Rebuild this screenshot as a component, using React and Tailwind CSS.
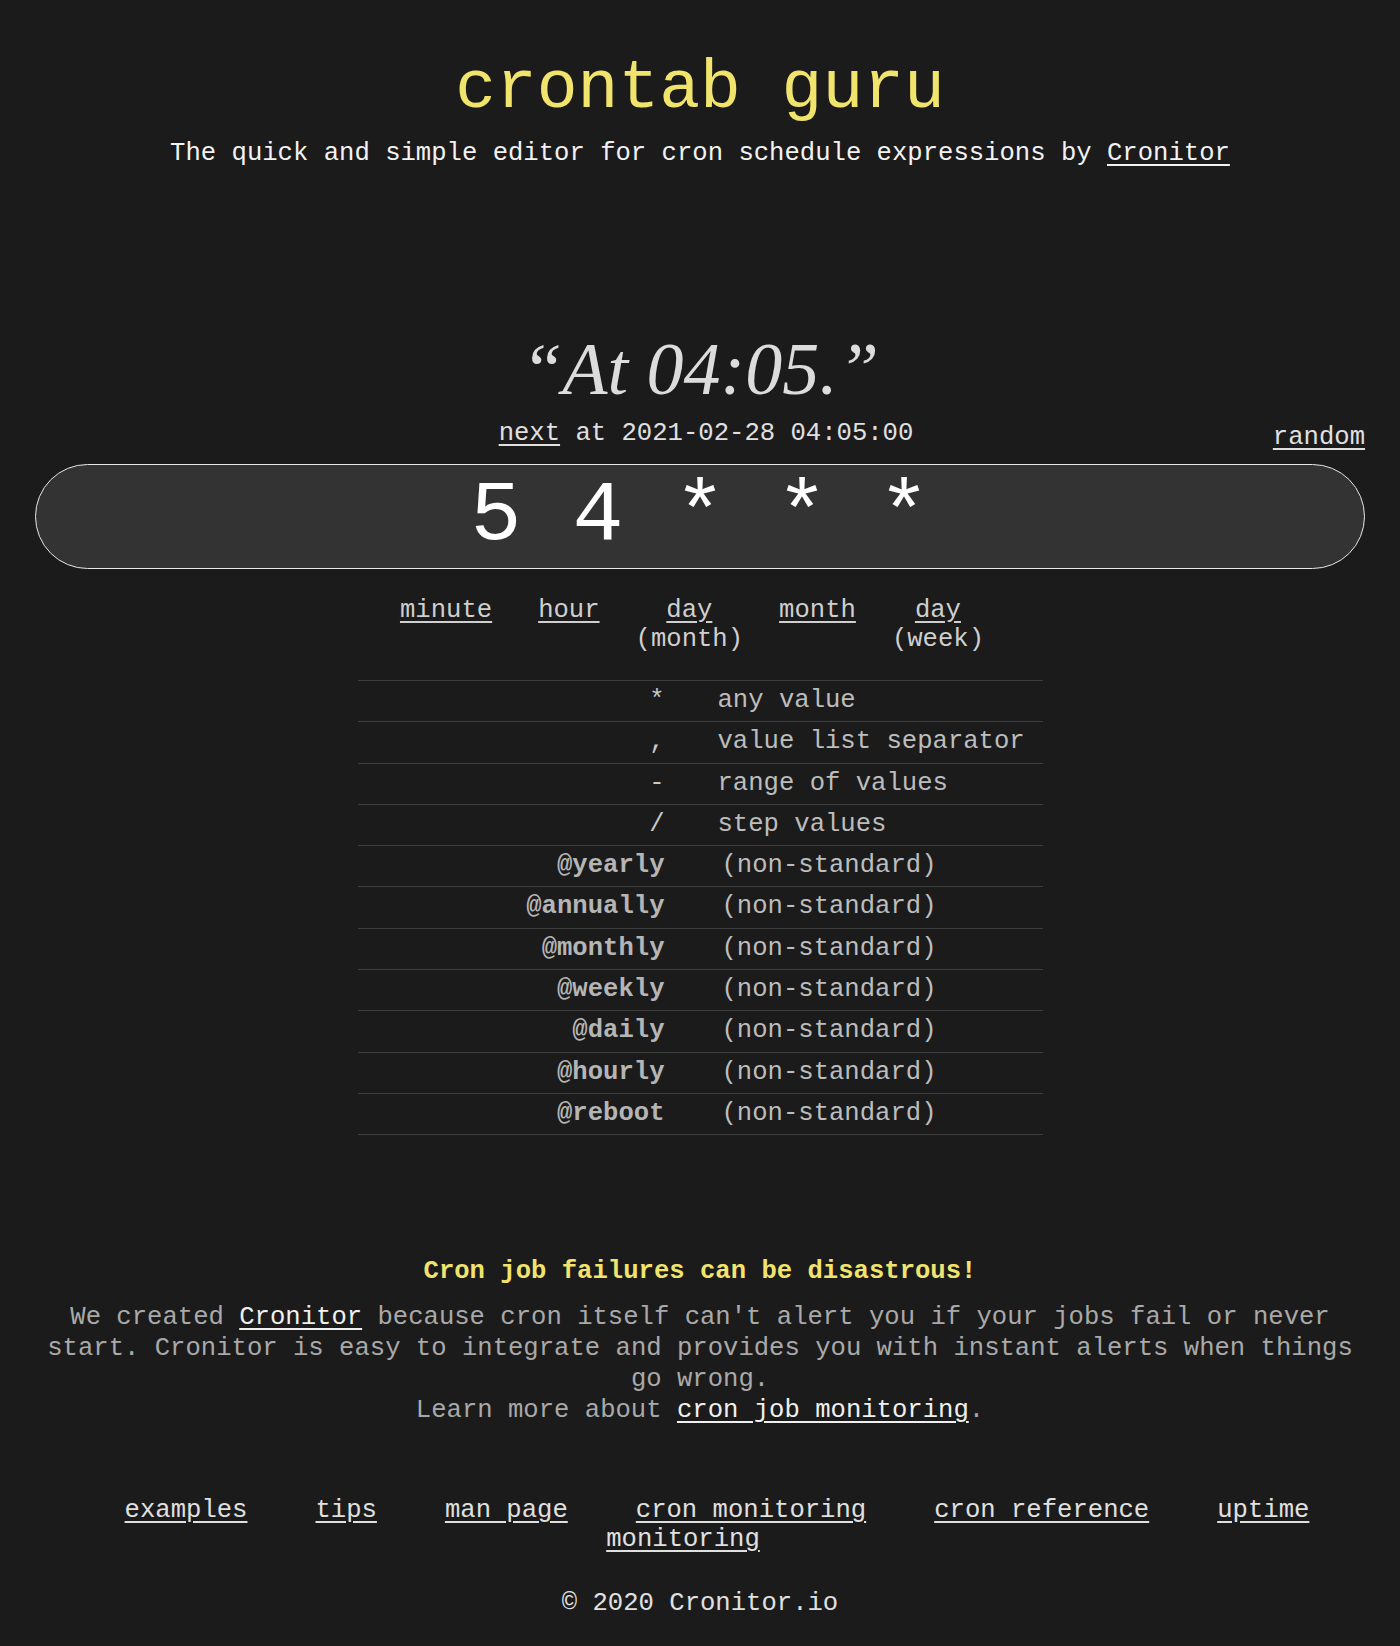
import React from "react";

const mono = { fontFamily: "'Liberation Mono', 'Courier New', monospace" };

const rows = [
  ["*", "any value", false],
  [",", "value list separator", false],
  ["-", "range of values", false],
  ["/", "step values", false],
  ["@yearly", "(non-standard)", true],
  ["@annually", "(non-standard)", true],
  ["@monthly", "(non-standard)", true],
  ["@weekly", "(non-standard)", true],
  ["@daily", "(non-standard)", true],
  ["@hourly", "(non-standard)", true],
  ["@reboot", "(non-standard)", true],
];

export default function App() {
  return (
    <div
      className="min-h-[1646px] w-full bg-[#1b1b1b] px-[35px] pb-[30px] pt-[49px] text-[25.6px] text-[#e6e6e6]"
      style={mono}
    >
      <h1 className="text-center text-[68px] font-normal leading-[80px] text-[#f1e46d]">
        crontab guru
      </h1>
      <p className="mt-[10px] text-center leading-[30px] text-[#f2f2f2]">
        The quick and simple editor for cron schedule expressions by{" "}
        <a className="underline underline-offset-4">Cronitor</a>
      </p>

      <div
        className="mt-[160px] text-center text-[74px] italic leading-[80px] text-[#dcdcdc]"
        style={{ fontFamily: "'Liberation Serif', Georgia, serif" }}
      >
        “At 04:05.”
      </div>

      <div className="mt-[10px] grid grid-cols-[1fr_auto_1fr] items-start leading-[30px] text-[#e0e0e0]">
        <div />
        <div className="pl-[12px]">
          <a className="underline underline-offset-4">next</a> at 2021-02-28 04:05:00
        </div>
        <div className="flex justify-end pt-[4px]">
          <a className="underline underline-offset-4">random</a>
        </div>
      </div>

      <div className="mt-[11px] flex h-[105px] items-center justify-center rounded-full border border-[#e8e8e8] bg-[#333333] text-[85px] leading-none text-white">
        <span className="whitespace-pre">5 4 * * *</span>
      </div>

      <div className="mt-[27px] flex justify-center gap-[36px] pr-[16px] leading-[29px] text-[#cfcfcf]">
        <div className="flex flex-col items-center">
          <a className="underline underline-offset-4">minute</a>
        </div>
        <div className="ml-[10px] flex flex-col items-center">
          <a className="underline underline-offset-4">hour</a>
        </div>
        <div className="flex flex-col items-center">
          <a className="underline underline-offset-4">day</a>
          <span>(month)</span>
        </div>
        <div className="flex flex-col items-center">
          <a className="underline underline-offset-4">month</a>
        </div>
        <div className="flex flex-col items-center">
          <a className="underline underline-offset-4">day</a>
          <span>(week)</span>
        </div>
      </div>

      <div className="mx-auto mt-[26px] w-[685px] border-t border-[#3e3e3e] text-[#bdbdbd]">
        {rows.map(([sym, desc, bold]) => (
          <div
            key={sym}
            className="grid h-[41.3px] grid-cols-[307px_1fr] items-center border-b border-[#3e3e3e]"
          >
            <div className={bold ? "text-right font-bold text-[#b5b5b5]" : "text-right text-[#c8c8c8]"}>
              {sym}
            </div>
            <div className={bold ? "pl-[57px]" : "pl-[53px]"}>{desc}</div>
          </div>
        ))}
      </div>

      <div className="mt-[122px] text-center font-bold leading-[30px] text-[#f1e46d]">
        Cron job failures can be disastrous!
      </div>
      <p className="mt-[15px] text-center leading-[31px] text-[#a9a9a9]">
        We created <a className="text-[#f0f0f0] underline underline-offset-4">Cronitor</a> because cron
        itself can't alert you if your jobs fail or never start. Cronitor is easy to integrate and
        provides you with instant alerts when things go wrong.
        <br />
        Learn more about{" "}
        <a className="text-[#f0f0f0] underline underline-offset-4">cron job monitoring</a>.
      </p>

      <div className="mt-[70px] text-center leading-[29px] text-[#e0e0e0]">
        <a className="mx-[34px] underline underline-offset-4">examples</a>
        <a className="mx-[34px] underline underline-offset-4">tips</a>
        <a className="mx-[34px] underline underline-offset-4">man page</a>
        <a className="mx-[34px] underline underline-offset-4">cron monitoring</a>
        <a className="mx-[34px] underline underline-offset-4">cron reference</a>
        <a className="mx-[34px] underline underline-offset-4">uptime monitoring</a>
      </div>

      <div className="mt-[35px] text-center leading-[30px] text-[#e0e0e0]">© 2020 Cronitor.io</div>
    </div>
  );
}
